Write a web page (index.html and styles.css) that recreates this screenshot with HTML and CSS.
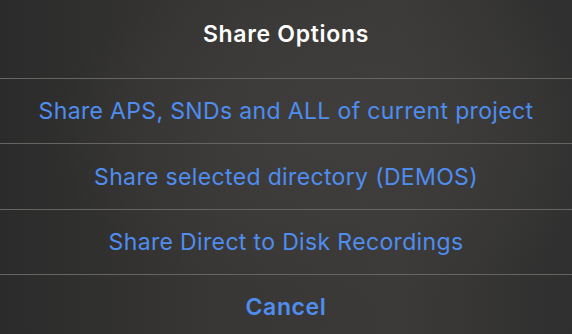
FILE: index.html
```html
<!DOCTYPE html>
<html lang="en">
<head>
    <meta charset="UTF-8">
    <title>Share Options</title>
    <link rel="stylesheet" href="styles.css">
</head>
<body>

<div class="sheet">
    <div class="sheet-title">Share Options</div>
    <ul class="sheet-actions">
        <li class="action">Share APS, SNDs and ALL of current project</li>
        <li class="action">Share selected directory (DEMOS)</li>
        <li class="action">Share Direct to Disk Recordings</li>
        <li class="action cancel">Cancel</li>
    </ul>
</div>

</body>
</html>
```

FILE: styles.css
```css
body {
    margin: 0;
    background-color: #333231;
    font-family: 'Inter', 'Noto Sans', sans-serif;
    overflow: hidden;
}

.sheet {
    width: 572px;
    height: 334px;
    background:
        radial-gradient(ellipse at 60% 40%, #3f3e3c 0%, rgba(63, 62, 60, 0) 60%),
        linear-gradient(90deg, #2b2b2b 0%, #383735 40%, #3b3a38 70%, #2f2f2f 100%);
}

.sheet-title {
    height: 78px;
    display: flex;
    align-items: center;
    justify-content: center;
    color: #ffffff;
    font-size: 23px;
    font-weight: 600;
    letter-spacing: 0.7px;
    padding-bottom: 10px;
    box-sizing: border-box;
}

.sheet-actions {
    list-style: none;
    margin: 0;
    padding: 0;
}

.action {
    height: 65.4px;
    box-sizing: border-box;
    display: flex;
    align-items: center;
    justify-content: center;
    border-top: 1px solid #666562;
    color: #4f8df0;
    font-size: 23px;
    letter-spacing: 0.35px;
    cursor: pointer;
}

.action.cancel {
    font-weight: 600;
    letter-spacing: 0.6px;
}
```
